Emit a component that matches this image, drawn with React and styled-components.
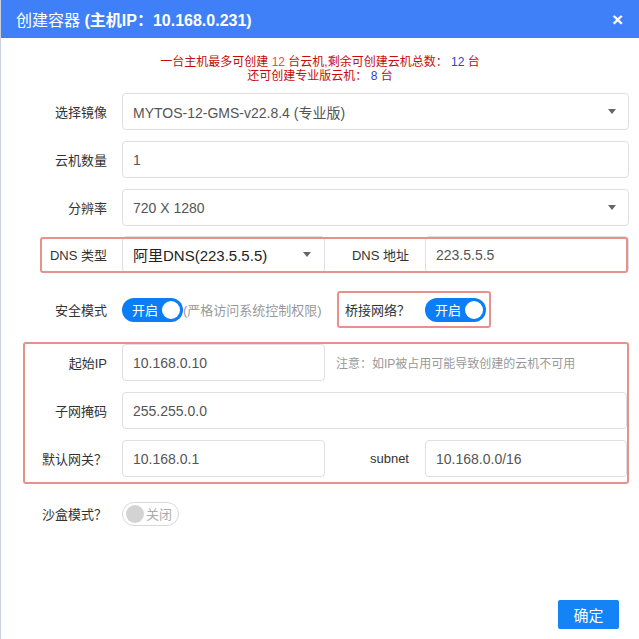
import React from "react";
import styled, { createGlobalStyle } from "styled-components";

const GlobalStyle = createGlobalStyle`
  html, body {
    margin: 0;
    padding: 0;
    background: #fff;
  }
  body {
    font-family: "Liberation Sans", "Noto Sans CJK SC", sans-serif;
  }
  * {
    box-sizing: border-box;
  }
`;

const Dialog = styled.div`
  width: 639px;
  height: 639px;
  display: flex;
  flex-direction: column;
  border-left: 1px solid #c9d2dd;
  background: #fff;
  overflow: hidden;
`;

const Header = styled.div`
  height: 38px;
  flex-shrink: 0;
  background: #3f80f8;
  color: #fff;
  display: flex;
  align-items: center;
  justify-content: space-between;
  padding: 0 16px 0 15px;
  font-size: 16px;

  b {
    font-weight: 700;
  }
`;

const Close = styled.span`
  font-size: 19px;
  font-weight: 700;
  line-height: 1;
  margin-top: 1px;
`;

const Notice = styled.div`
  margin-top: 17px;
  text-align: center;
  font-size: 12px;
  line-height: 14px;
  color: #c40d0d;
`;

const Num = styled.span`
  color: ${(p) => (p.$blue ? "#2f3fc8" : "#ef4b4b")};
`;

const Form = styled.div`
  margin-top: 10px;
  padding: 0 10px 0 22px;
  display: flex;
  flex-direction: column;
`;

const Row = styled.div`
  position: relative;
  display: flex;
  align-items: center;
  height: 37px;
  margin-top: ${(p) => p.$mt ?? 11}px;
`;

const DnsRow = styled(Row)`
  &::after {
    content: "";
    position: absolute;
    left: 17px;
    right: 1px;
    top: 1px;
    height: 32px;
    border: 2px solid #e8908a;
    border-radius: 3px;
    pointer-events: none;
  }
`;

const Label = styled.div`
  width: ${(p) => p.$w || 99}px;
  flex-shrink: 0;
  padding-right: 15px;
  text-align: right;
  font-size: 13px;
  color: #333;
  white-space: nowrap;
`;

const MidLabel = styled.div`
  width: 100px;
  flex-shrink: 0;
  padding-right: 16px;
  text-align: right;
  font-size: 13px;
  color: #333;
`;

const Field = styled.div`
  height: 37px;
  flex: ${(p) => (p.$half ? "0 0 203px" : "1 1 auto")};
  border: 1px solid #dcdfe4;
  border-radius: 4px;
  display: flex;
  align-items: center;
  justify-content: space-between;
  padding: 0 12px 0 10px;
  font-size: ${(p) => (p.$big ? "15px" : "14px")};
  color: ${(p) => (p.$big ? "#222" : "#555")};
  background: #fff;
  white-space: nowrap;
`;

const Caret = styled.span`
  width: 0;
  height: 0;
  border-left: 4px solid transparent;
  border-right: 4px solid transparent;
  border-top: 5px solid #666;
  margin-right: ${(p) => p.$mr || 0}px;
`;

const Toggle = styled.div`
  width: ${(p) => (p.$on ? 61 : 57)}px;
  height: 24px;
  border-radius: 12px;
  flex-shrink: 0;
  display: flex;
  align-items: center;
  flex-direction: ${(p) => (p.$on ? "row" : "row-reverse")};
  justify-content: space-between;
  padding: ${(p) => (p.$on ? "0 3px 0 10px" : "0 6px 0 3px")};
  background: ${(p) => (p.$on ? "#0b7df6" : "#fff")};
  border: ${(p) => (p.$on ? "none" : "1px solid #d8d8d8")};
  color: ${(p) => (p.$on ? "#fff" : "#aaa")};
  font-size: 13px;
  white-space: nowrap;
`;

const Knob = styled.span`
  width: 18px;
  height: 18px;
  border-radius: 50%;
  flex-shrink: 0;
  background: ${(p) => (p.$on ? "#fff" : "#d3d3d3")};
`;

const Hint = styled.span`
  font-size: ${(p) => p.$size || 13}px;
  color: #999;
  white-space: nowrap;
  margin-left: ${(p) => p.$ml || 0}px;
`;

const SafeCell = styled.div`
  width: 215px;
  flex-shrink: 0;
  display: flex;
  align-items: center;
`;

const BridgeBox = styled.div`
  height: 37px;
  width: 154px;
  border: 2px solid #e8908a;
  border-radius: 3px;
  display: flex;
  align-items: center;
  justify-content: space-between;
  padding: 0 3px 0 6px;
  font-size: 13px;
  color: #333;
`;

const NetBox = styled.div`
  margin-top: 14px;
  border: 2px solid #e8908a;
  border-radius: 3px;
  padding-bottom: 5px;
  display: flex;
  flex-direction: column;
`;

const Footer = styled.div`
  margin-top: auto;
  display: flex;
  justify-content: flex-end;
  padding: 0 20px 10px 0;
`;

const Button = styled.button`
  width: 61px;
  height: 29px;
  border: none;
  border-radius: 2px;
  background: #1483f6;
  color: #fff;
  font-family: inherit;
  font-size: 15px;
  cursor: pointer;
`;

export default function App() {
  return (
    <>
      <GlobalStyle />
      <Dialog>
        <Header>
          <span>
            创建容器 <b>(主机IP：10.168.0.231)</b>
          </span>
          <Close>×</Close>
        </Header>

        <Notice>
          <div>
            一台主机最多可创建 <Num>12</Num> 台云机,剩余可创建云机总数：{" "}
            <Num $blue>12</Num> 台
          </div>
          <div>
            还可创建专业版云机： <Num $blue>8</Num> 台
          </div>
        </Notice>

        <Form>
          <Row $mt={0}>
            <Label>选择镜像</Label>
            <Field>
              MYTOS-12-GMS-v22.8.4 (专业版)
              <Caret />
            </Field>
          </Row>
          <Row>
            <Label>云机数量</Label>
            <Field>1</Field>
          </Row>
          <Row>
            <Label>分辨率</Label>
            <Field>
              720 X 1280
              <Caret />
            </Field>
          </Row>

          <DnsRow $mt={10}>
            <Label>DNS 类型</Label>
            <Field $half $big>
              阿里DNS(223.5.5.5)
              <Caret $mr={1} />
            </Field>
            <MidLabel>DNS 地址</MidLabel>
            <Field>223.5.5.5</Field>
          </DnsRow>

          <Row $mt={18}>
            <Label>安全模式</Label>
            <SafeCell>
              <Toggle $on>
                开启
                <Knob $on />
              </Toggle>
              <Hint>(严格访问系统控制权限)</Hint>
            </SafeCell>
            <BridgeBox>
              桥接网络？
              <Toggle $on>
                开启
                <Knob $on />
              </Toggle>
            </BridgeBox>
          </Row>

          <NetBox>
            <Row $mt={0}>
              <Label $w={97}>起始IP</Label>
              <Field $half>10.168.0.10</Field>
              <Hint $size={12} $ml={11}>
                注意：如IP被占用可能导致创建的云机不可用
              </Hint>
            </Row>
            <Row>
              <Label $w={97}>子网掩码</Label>
              <Field>255.255.0.0</Field>
            </Row>
            <Row>
              <Label $w={97}>默认网关？</Label>
              <Field $half>10.168.0.1</Field>
              <MidLabel>subnet</MidLabel>
              <Field>10.168.0.0/16</Field>
            </Row>
          </NetBox>

          <Row $mt={11}>
            <Label>沙盒模式？</Label>
            <Toggle>
              关闭
              <Knob />
            </Toggle>
          </Row>
        </Form>

        <Footer>
          <Button>确定</Button>
        </Footer>
      </Dialog>
    </>
  );
}
